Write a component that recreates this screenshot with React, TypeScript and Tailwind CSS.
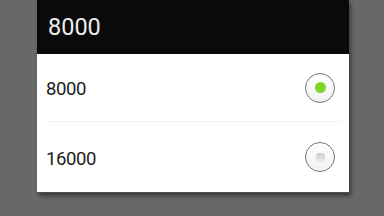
export default function App() {
  return (
    <div className="h-[216px] w-[384px] overflow-hidden bg-[#686868] pl-[37px] font-['Roboto',sans-serif]">
      <div className="w-[312px] border-b border-[#505050] bg-white shadow-[2px_3px_4px_rgba(0,0,0,0.45)]">
        <div className="flex h-[54px] items-center bg-[#0a0a0a] pl-[11px] pt-[2px] text-[23.5px] leading-none text-[#ececec]">
          8000
        </div>
        <Row label="8000" checked height="h-[67px]" />
        <div className="mx-[8px] h-px bg-[#f3f3f3]" />
        <Row label="16000" height="h-[70px]" />
      </div>
    </div>
  );
}

function Row({
  label,
  checked,
  height,
}: {
  label: string;
  checked?: boolean;
  height: string;
}) {
  return (
    <div className={`flex ${height} items-center justify-between pl-[9px] pr-[14px]`}>
      <span className="pt-[4px] text-[18.5px] leading-none tracking-[-0.4px] text-[#1c1c1c]">
        {label}
      </span>
      <span className="flex h-[30px] w-[30px] items-center justify-center rounded-full border-[1.75px] border-[#747474] bg-gradient-to-b from-white to-[#f2f2f2]">
        {checked ? (
          <span className="h-[11px] w-[11px] rounded-full bg-[#7fd52a]" />
        ) : (
          <span className="h-[9px] w-[9px] rounded-[3px] bg-gradient-to-b from-[#cfcfcf] to-[#ececec]" />
        )}
      </span>
    </div>
  );
}
